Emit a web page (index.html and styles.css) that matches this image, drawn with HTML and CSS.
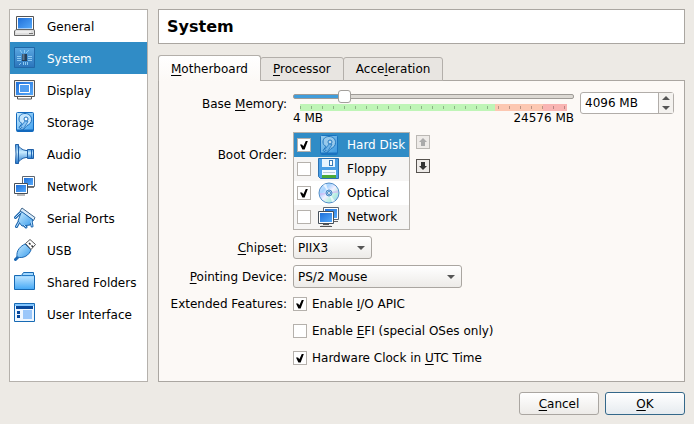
FILE: index.html
```html
<!DOCTYPE html>
<html lang="en">
<head>
<meta charset="utf-8">
<title>Settings - System</title>
<link rel="stylesheet" href="styles.css">
</head>
<body>
<svg class="defs" aria-hidden="true">
  <defs>
    <linearGradient id="screen" x1="0" y1="0" x2="1" y2="1"><stop offset="0" stop-color="#1f6fd8"/><stop offset="1" stop-color="#55a9fb"/></linearGradient>
    <linearGradient id="sky" x1="0" y1="0" x2="1" y2="1"><stop offset="0" stop-color="#c9ecff"/><stop offset="1" stop-color="#3a9cec"/></linearGradient>
    <linearGradient id="folder" x1="0" y1="0" x2="0" y2="1"><stop offset="0" stop-color="#b5e0ff"/><stop offset="1" stop-color="#48aaf6"/></linearGradient>
    <linearGradient id="cone" x1="0" y1="0" x2="0" y2="1"><stop offset="0" stop-color="#4a9be3"/><stop offset=".4" stop-color="#c9ecff"/><stop offset="1" stop-color="#1f75cc"/></linearGradient>
    <linearGradient id="metal" x1="0" y1="0" x2="0" y2="1"><stop offset="0" stop-color="#5ba8e2"/><stop offset="1" stop-color="#2a74bb"/></linearGradient>
    <linearGradient id="disc" x1="0" y1="0" x2="1" y2="1"><stop offset="0" stop-color="#d3e8ff"/><stop offset=".3" stop-color="#a8d4ff"/><stop offset=".5" stop-color="#f3f0ff"/><stop offset=".7" stop-color="#b9f0e2"/><stop offset="1" stop-color="#9bc0f7"/></linearGradient>
    <symbol id="i-disk" viewBox="0 0 22 22">
      <rect x="2.500" y="1.500" width="17" height="19" rx="1" fill="url(#sky)" stroke="#1269bd"/>
      <path d="M3 18.500h16v2H3z" fill="#1269bd"/>
      <path d="M11 2.500c4 0 6.500 2.500 6.500 6s-2 5-4.500 6l-4 4.500-4-2.500 3-4c-2-1-3-2.500-3-4.500 0-3.500 2.500-5.500 6-5.500z" fill="#c3e4fc" stroke="#1b6fbc"/>
      <path d="M6.500 16l5-6.500 2.500 1-4.500 7z" fill="#8cc6f5" stroke="#1b6fbc" stroke-width=".8"/>
      <circle cx="12" cy="8" r="2" fill="#fff" stroke="#1b6fbc"/>
    </symbol>
  </defs>
</svg>
<div class="dialog">
  <nav class="sidebar">
    <a href="#general"><svg viewBox="0 0 22 22"><path d="M2.500 1.500h17v13h-17z" fill="#fff" stroke="#555"/><path d="M4 3h14v10.500H4z" fill="url(#screen)"/><path d="M2 14.500h18l.500 1.500v4.500H.500V16z" fill="#ddd" stroke="#666"/><path d="M2 17h15" stroke="#fff"/><path d="M15 18.500h4" stroke="#777"/></svg>General</a>
    <a href="#system" class="current"><svg viewBox="0 0 22 22"><path d="M.500.500h20v20H.500z" fill="url(#metal)" stroke="#2168a8"/><path d="M8 7h5v7H8z" fill="#243e59"/><path d="M8.500 7h2v6h-2z" fill="#5a7893"/><path d="M3 9.500h4M3 11.500h4M3 13.500h4M14 9.500h4M14 11.500h4M14 13.500h4M9.500 15v3M11.500 15v3M13.500 15v3M8 6L6 3M12 6l3-3M5 18l2-2M10.500 3v3" stroke="#9fd8fa" stroke-width=".8"/></svg>System</a>
    <a href="#display"><svg viewBox="0 0 22 22"><path d="M.500 1.500h20v16H.500z" fill="#eee" stroke="#555"/><path d="M2 3h17v13H2z" fill="url(#screen)"/><path d="M5.500 5.500h10v8h-10z" fill="#4f9df0" stroke="#fff"/><path d="M3.500 17.500h14v2.500h-14z" fill="#fff" stroke="#555"/></svg>Display</a>
    <a href="#storage"><svg><use href="#i-disk"/></svg>Storage</a>
    <a href="#audio"><svg viewBox="0 0 22 22"><path d="M4 1.500c1 3 4 5.500 8 6h2v7h-2c-4 .5-7 3-8 6z" fill="url(#cone)" stroke="#205fa6"/><path d="M1.500 1.500h3v19h-3l.500-9.500z" fill="url(#cone)" stroke="#205fa6"/><path d="M13.500 6.500h6v9h-6z" fill="url(#cone)" stroke="#205fa6"/><path d="M17.500 7v8" stroke="#1b64b6"/></svg>Audio</a>
    <a href="#network"><svg viewBox="0 0 22 22"><path d="M8.500 1.500h12v10h-12z" fill="#fff" stroke="#5d6671"/><path d="M10 3h9v7h-9z" fill="url(#screen)"/><path d="M14 12.500h6" stroke="#777"/><path d="M.500 8.500h13v10H.500z" fill="#fff" stroke="#454e59"/><path d="M2 10h10v7H2z" fill="url(#screen)"/><path d="M3 20h8" stroke="#777"/></svg>Network</a>
    <a href="#serial"><svg viewBox="0 0 22 22"><path d="M7 5l-5.500 5.500M5 15l-2.500 4.500M10 18l2 2M17 14l1 5" stroke="#1d66ae" stroke-width="3" stroke-linecap="round"/><path d="M8 1l13 9.500-1.500 3L6 4z" fill="#d9ecfb" stroke="#41668a"/><path d="M7.500 4.500L19 13l-3 5-8 1-4-5z" fill="url(#sky)" stroke="#1d66ae"/><path d="M7 5l-5.500 5.500M5 15l-2.500 4.500M10 18l2 2M17 14l1 5" stroke="#b8e0ff" stroke-linecap="round"/></svg>Serial Ports</a>
    <a href="#usb"><svg viewBox="0 0 22 22"><path d="M1.500 20.500l3-3" stroke="#1c68b3" stroke-width="3" stroke-linecap="round"/><path d="M3 18c-1-7 4-11 8-13l6 6c-2 5-7 9-14 7z" fill="url(#sky)" stroke="#1c68b3"/><path d="M11.500 4.500L16 .500l5.500 5-4.500 5z" fill="#fff" stroke="#555"/><path d="M15 4l1.500 1.500M17.500 6.500L19 8" stroke="#333" stroke-width="1.500"/></svg>USB</a>
    <a href="#folders"><svg viewBox="0 0 22 22"><path d="M.500 4.500h7l2-3h10v3h1v14H.500z" fill="#a2d8ff" stroke="#176ab4"/><path d="M1 6h19v12H1z" fill="url(#folder)"/><path d="M8 4.500h12" stroke="#267bc5"/></svg>Shared Folders</a>
    <a href="#interface"><svg viewBox="0 0 22 22"><path d="M.500.500h20v18H.500z" fill="#eff7ff" stroke="#176ab4"/><path d="M1 1h19v2H1z" fill="#80c5ff"/><path d="M2 3h17v3H2z" fill="#07479b"/><path d="M3 8h3v3H3zM3 12h3v3H3z" fill="#07479b"/><path d="M9 7h9v9H9z" fill="#9ac7fa"/></svg>User Interface</a>
  </nav>

  <main class="content">
    <h1>System</h1>
    <div class="tabs" role="tablist">
      <button type="button" role="tab" aria-selected="true"><u>M</u>otherboard</button>
      <button type="button" role="tab" aria-selected="false"><u>P</u>rocessor</button>
      <button type="button" role="tab" aria-selected="false">Acce<u>l</u>eration</button>
    </div>
    <form class="panel" id="settings">
      <label class="name memory-name" for="memory">Base <u>M</u>emory:</label>
      <div class="memory">
        <div class="gauge">
          <input type="range" id="memory" min="4" max="24576" value="4096">
          <div class="scale"></div>
          <div class="limits"><span>4 MB</span><span>24576 MB</span></div>
        </div>
        <div class="spin">
          <input type="text" aria-label="Base memory size" value="4096 MB">
          <div class="steps"><button type="button" aria-label="Increase"></button><button type="button" aria-label="Decrease"></button></div>
        </div>
      </div>

      <span class="name boot-name">Boot Order:</span>
      <div class="boot">
        <div class="order">
          <label class="selected"><input type="checkbox" checked><svg><use href="#i-disk"/></svg>Hard Disk</label>
          <label><input type="checkbox"><svg viewBox="0 0 22 22"><path d="M.500.500h20v20H2.500l-2-2z" fill="#4a9fe6" stroke="#2b71b2"/><path d="M4 1h13v8H4z" fill="#e8f5ff"/><path d="M11 2h4v6h-4z" fill="#387bb9"/><path d="M12 3h2v4h-2z" fill="#fff"/><path d="M4 12h14v8H4z" fill="#f5faff"/><path d="M4 17h14v3H4z" fill="#4aaa37"/><path d="M5 14.500h12" stroke="#bcd"/></svg>Floppy</label>
          <label><input type="checkbox" checked><svg viewBox="0 0 22 22"><circle cx="11" cy="11" r="10" fill="url(#disc)" stroke="#548fc8"/><path d="M11 11L5 3l3-1zM11 11l6 8-3 1z" fill="#fff" opacity=".7"/><path d="M11 11l9-3v3zM11 11l-9 3v-3z" fill="#d3b6f2" opacity=".6"/><circle cx="11" cy="11" r="3" fill="#a7d4f9" stroke="#4c89c2"/><circle cx="11" cy="11" r="1.500" fill="#fff" stroke="#4c89c2"/></svg>Optical</label>
          <label><input type="checkbox"><svg viewBox="0 0 22 22"><path d="M5.500 1.500h15v12h-15z" fill="#fff" stroke="#5d6671"/><path d="M7 3h12v9H7z" fill="url(#screen)"/><path d="M14 15.500h6" stroke="#666"/><path d="M.500 5.500h15v12H.500z" fill="#fff" stroke="#454e59"/><path d="M2 7h12v9H2z" fill="url(#screen)"/><path d="M5 18.500h6M2 20.500h12" stroke="#555"/><path d="M3 19.500h10" stroke="#ddd"/></svg>Network</label>
        </div>
        <div class="movers">
          <button type="button" aria-label="Move up" disabled><svg viewBox="0 0 10 10"><path d="M5 1l4 4H7v4H3V5H1z" fill="currentColor"/></svg></button>
          <button type="button" aria-label="Move down"><svg viewBox="0 0 10 10"><path d="M5 9L1 5h2V1h4v4h2z" fill="currentColor"/></svg></button>
        </div>
      </div>

      <label class="name" for="chipset"><u>C</u>hipset:</label>
      <div class="combo short"><select id="chipset"><option>PIIX3</option><option>ICH9</option></select></div>

      <label class="name" for="pointing"><u>P</u>ointing Device:</label>
      <div class="combo"><select id="pointing"><option>PS/2 Mouse</option><option>USB Tablet</option></select></div>

      <span class="name features-name">Extended Features:</span>
      <div class="features">
        <label><input type="checkbox" checked><span>Enable <u>I</u>/O APIC</span></label>
        <label><input type="checkbox"><span>Enable <u>E</u>FI (special OSes only)</span></label>
        <label><input type="checkbox" checked><span>Hardware Clock in <u>U</u>TC Time</span></label>
      </div>
    </form>
  </main>

  <footer>
    <button type="button"><u>C</u>ancel</button>
    <button type="submit" form="settings" class="default"><u>O</u>K</button>
  </footer>
</div>
</body>
</html>
```
FILE: styles.css
```css
* { box-sizing: border-box; }

body {
  margin: 0;
  background: #edeae5;
  color: #000;
  font: 12px/16px "DejaVu Sans", sans-serif;
}

button, input, select { font: inherit; color: inherit; margin: 0; }
u { text-underline-offset: 2px; text-decoration-thickness: 1px; text-decoration-skip-ink: none; }
.defs { position: absolute; width: 0; height: 0; }

.dialog {
  display: grid;
  grid-template-columns: 139px 1fr;
  grid-template-rows: 1fr auto;
  column-gap: 10px;
  row-gap: 10px;
  min-height: 100vh;
  padding: 9px;
}

.sidebar { background: #fff; border: 1px solid #b5b1ac; }
.sidebar a {
  display: flex;
  align-items: center;
  gap: 11px;
  height: 32px;
  padding: 2px 0 0 4px;
  color: #000;
  text-decoration: none;
  white-space: nowrap;
}
.sidebar svg, .order svg { width: 22px; height: 22px; flex: none; }
.sidebar svg { align-self: flex-start; margin-top: 3px; }
.sidebar .current { background: #308cc6; color: #fff; }

.content { display: flex; flex-direction: column; min-width: 0; }
h1 {
  margin: 0 0 11px;
  padding: 8px;
  background: #fff;
  border: 1px solid #aaa6a1;
  font-size: 16px;
  line-height: 17px;
}

.tabs { display: flex; align-items: flex-end; position: relative; }
.tabs button {
  height: 24px;
  padding: 0 12px;
  margin-left: -1px;
  border: 1px solid #b3afaa;
  border-radius: 3px 3px 0 0;
  background: #e8e5e1;
}
.tabs [aria-selected="true"] {
  z-index: 1;
  height: 26px;
  margin-left: 0;
  border-bottom: 0;
  background: linear-gradient(#fff, #fcf9f6);
}

.panel {
  flex: 1;
  display: grid;
  grid-template-columns: 125px 1fr;
  align-content: start;
  column-gap: 6px;
  row-gap: 6px;
  margin-top: -1px;
  padding: 9px 10px 8px 3px;
  border: 1px solid #aaa6a1;
  background: #fcf9f6;
}
.name { justify-self: end; padding-top: 4px; white-space: nowrap; }
.memory-name { padding-top: 6px; }
.boot-name { padding-top: 15px; }
.features-name { padding-top: 2px; }

.memory { display: flex; gap: 6px; }
.gauge { flex: 1; min-width: 0; }
.gauge input {
  appearance: none;
  display: block;
  width: 100%;
  height: 13px;
  background: none;
}
.gauge input::-webkit-slider-runnable-track {
  height: 5px;
  border: 1px solid #9e9b97;
  border-radius: 2px;
  background: linear-gradient(90deg, #409ddb 17%, #dcd9d4 17%);
}
.gauge input::-webkit-slider-thumb {
  appearance: none;
  width: 13px;
  height: 13px;
  margin-top: -5px;
  border: 1px solid #a3a09c;
  border-radius: 3px;
  background: #fff;
}
.scale {
  height: 7px;
  margin: 1px 7px 0;
  background:
    repeating-linear-gradient(90deg, #0004 0 1px, #0000 1px 11px) 0 2px / 100% 3px no-repeat,
    linear-gradient(90deg, #bff5b7 73%, #fcc8b2 73% 91%, #f9b5b3 91%);
}
.limits { display: flex; justify-content: space-between; line-height: 15px; }

.spin {
  display: flex;
  width: 94px;
  height: 22px;
  margin-top: 2px;
  border: 1px solid #b1ada9;
  border-radius: 3px;
  background: #fff;
}
.spin input { flex: 1; min-width: 0; padding: 0 4px; border: 0; background: none; }
.steps { display: grid; width: 15px; border-left: 1px solid #b1ada9; background: #f4f2ef; }
.steps button { padding: 0; border: 0; background: none; display: grid; place-items: center; }
.steps button::before { content: ""; width: 8px; height: 4px; background: #555; clip-path: polygon(50% 0, 100% 100%, 0 100%); }
.steps button:last-child::before { clip-path: polygon(0 0, 100% 0, 50% 100%); }

.boot { display: flex; align-items: flex-start; gap: 6px; }
.order { width: 117px; border: 1px solid #b5b1ac; background: #fff; }
.order label { display: flex; align-items: center; height: 24px; padding-left: 3px; white-space: nowrap; }
.order label:nth-child(even) { background: #f6f5f4; }
.order .selected { background: #308cc6; color: #fff; }
.order svg { margin: 0 7px; }
.order .selected svg { opacity: .7; }

input[type="checkbox"] {
  appearance: none;
  flex: none;
  display: grid;
  place-items: center;
  width: 14px;
  height: 14px;
  border: 1px solid #b5b1ac;
  background: #fff;
}
input[type="checkbox"]:checked::before {
  content: "";
  width: 8px;
  height: 9px;
  background: #000;
  clip-path: polygon(0 45%, 25% 45%, 42% 65%, 75% 0, 100% 0, 58% 100%, 30% 100%);
}

.movers { display: grid; gap: 10px; padding-top: 3px; }
.movers button { display: grid; place-items: center; width: 14px; height: 14px; padding: 0; border: 1px solid #57534f; background: #eeebe8; color: #333; }
.movers button:disabled { border-color: #bbb8b4; color: #aaa; }
.movers svg { width: 10px; height: 10px; }

.combo { position: relative; width: 169px; }
.combo.short { width: 79px; }
.combo select {
  appearance: none;
  display: block;
  width: 100%;
  height: 23px;
  padding: 0 20px 0 4px;
  border: 1px solid #aaa6a1;
  border-radius: 3px;
  background: linear-gradient(#fff, #edebe8);
}
.combo::after {
  content: "";
  position: absolute;
  right: 7px;
  top: 10px;
  width: 8px;
  height: 4px;
  background: #555;
  clip-path: polygon(0 0, 100% 0, 50% 100%);
  pointer-events: none;
}

.features { display: grid; gap: 11px; padding-top: 2px; }
.features label { display: flex; align-items: center; gap: 5px; justify-self: start; }

footer { grid-column: 1 / -1; display: flex; justify-content: flex-end; gap: 6px; }
footer button {
  width: 80px;
  height: 23px;
  padding: 0;
  border: 1px solid #aaa6a1;
  border-radius: 3px;
  background: linear-gradient(#fff, #edebe8);
}
footer .default { border-color: #34688a; background: linear-gradient(#fff, #e6ebef); }
```
